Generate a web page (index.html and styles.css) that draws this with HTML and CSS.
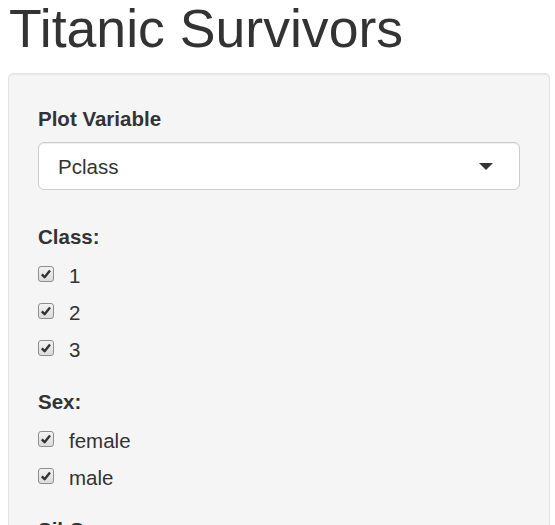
FILE: index.html
```html
<!DOCTYPE html>
<html>
<head>
<meta charset="utf-8">
<title>Titanic Survivors</title>
<link rel="stylesheet" href="styles.css">
</head>
<body>
<h1 class="title">Titanic Survivors</h1>
<div class="well">
  <div class="field field-select">
    <div class="field-label">Plot Variable</div>
    <div class="select">
      <span class="select-value">Pclass</span>
      <span class="caret"></span>
    </div>
  </div>

  <div class="field field-checks">
    <div class="field-label">Class:</div>
    <div class="options">
      <label class="option"><svg class="box" viewBox="0 0 16 16"><defs><linearGradient id="g1" x1="0" y1="0" x2="0" y2="1"><stop offset="0" stop-color="#f4f4f4"/><stop offset="1" stop-color="#dadada"/></linearGradient></defs><rect x="0.5" y="0.5" width="15" height="15" rx="2.5" fill="url(#g1)" stroke="#8e8e8e"/><path d="M3.8 8.4 L6.6 11.2 L12 4.6" fill="none" stroke="#333" stroke-width="2.4" stroke-linejoin="round"/></svg><span>1</span></label>
      <label class="option"><svg class="box" viewBox="0 0 16 16"><rect x="0.5" y="0.5" width="15" height="15" rx="2.5" fill="url(#g1)" stroke="#8e8e8e"/><path d="M3.8 8.4 L6.6 11.2 L12 4.6" fill="none" stroke="#333" stroke-width="2.4" stroke-linejoin="round"/></svg><span>2</span></label>
      <label class="option"><svg class="box" viewBox="0 0 16 16"><rect x="0.5" y="0.5" width="15" height="15" rx="2.5" fill="url(#g1)" stroke="#8e8e8e"/><path d="M3.8 8.4 L6.6 11.2 L12 4.6" fill="none" stroke="#333" stroke-width="2.4" stroke-linejoin="round"/></svg><span>3</span></label>
    </div>
  </div>

  <div class="field field-checks">
    <div class="field-label">Sex:</div>
    <div class="options">
      <label class="option"><svg class="box" viewBox="0 0 16 16"><rect x="0.5" y="0.5" width="15" height="15" rx="2.5" fill="url(#g1)" stroke="#8e8e8e"/><path d="M3.8 8.4 L6.6 11.2 L12 4.6" fill="none" stroke="#333" stroke-width="2.4" stroke-linejoin="round"/></svg><span>female</span></label>
      <label class="option"><svg class="box" viewBox="0 0 16 16"><rect x="0.5" y="0.5" width="15" height="15" rx="2.5" fill="url(#g1)" stroke="#8e8e8e"/><path d="M3.8 8.4 L6.6 11.2 L12 4.6" fill="none" stroke="#333" stroke-width="2.4" stroke-linejoin="round"/></svg><span>male</span></label>
    </div>
  </div>

  <div class="field field-checks">
    <div class="field-label">SibSp:</div>
    <div class="options">
      <label class="option"><svg class="box" viewBox="0 0 16 16"><rect x="0.5" y="0.5" width="15" height="15" rx="2.5" fill="url(#g1)" stroke="#8e8e8e"/><path d="M3.8 8.4 L6.6 11.2 L12 4.6" fill="none" stroke="#333" stroke-width="2.4" stroke-linejoin="round"/></svg><span>0</span></label>
      <label class="option"><svg class="box" viewBox="0 0 16 16"><rect x="0.5" y="0.5" width="15" height="15" rx="2.5" fill="url(#g1)" stroke="#8e8e8e"/><path d="M3.8 8.4 L6.6 11.2 L12 4.6" fill="none" stroke="#333" stroke-width="2.4" stroke-linejoin="round"/></svg><span>1</span></label>
    </div>
  </div>
</div>
</body>
</html>
```
FILE: styles.css
```css
html, body {
  margin: 0;
  padding: 0;
  background: #fff;
}
body {
  font-family: "Liberation Sans", Arial, Helvetica, sans-serif;
  font-size: 20.5px;
  line-height: 27px;
  color: #333;
  overflow: hidden;
}
.title {
  margin: 0 0 17px 0;
  padding-left: 9px;
  font-size: 53.6px;
  line-height: 56px;
  font-weight: normal;
  color: #333;
}
.well {
  margin-left: 8px;
  width: 542px;
  box-sizing: border-box;
  background: #f5f5f5;
  border: 1px solid #e3e3e3;
  border-radius: 5px;
  box-shadow: inset 0 1px 1px rgba(0, 0, 0, 0.05);
  padding: 31px 29px 40px 29px;
}
.field-label {
  font-weight: bold;
}
.field-select {
  display: flex;
  flex-direction: column;
  gap: 10px;
  margin-bottom: 33px;
}
.select {
  height: 48px;
  box-sizing: border-box;
  background: #fff;
  border: 1px solid #ccc;
  border-radius: 6px;
  box-shadow: inset 0 1px 1px rgba(0, 0, 0, 0.075);
  display: flex;
  align-items: center;
  justify-content: space-between;
  padding: 0 26px 0 19px;
}
.select-value {
  line-height: 27px;
}
.caret {
  width: 0;
  height: 0;
  border-left: 7px solid transparent;
  border-right: 7px solid transparent;
  border-top: 7px solid #333;
  margin-top: 1px;
}
.field-checks {
  display: flex;
  flex-direction: column;
  gap: 12px;
  margin-bottom: 25px;
}
.options {
  display: flex;
  flex-direction: column;
  gap: 10px;
}
.option {
  display: flex;
  align-items: flex-start;
  gap: 15px;
  height: 27px;
}
.box {
  width: 16px;
  height: 16px;
  margin-top: 4px;
  flex: none;
}
```
